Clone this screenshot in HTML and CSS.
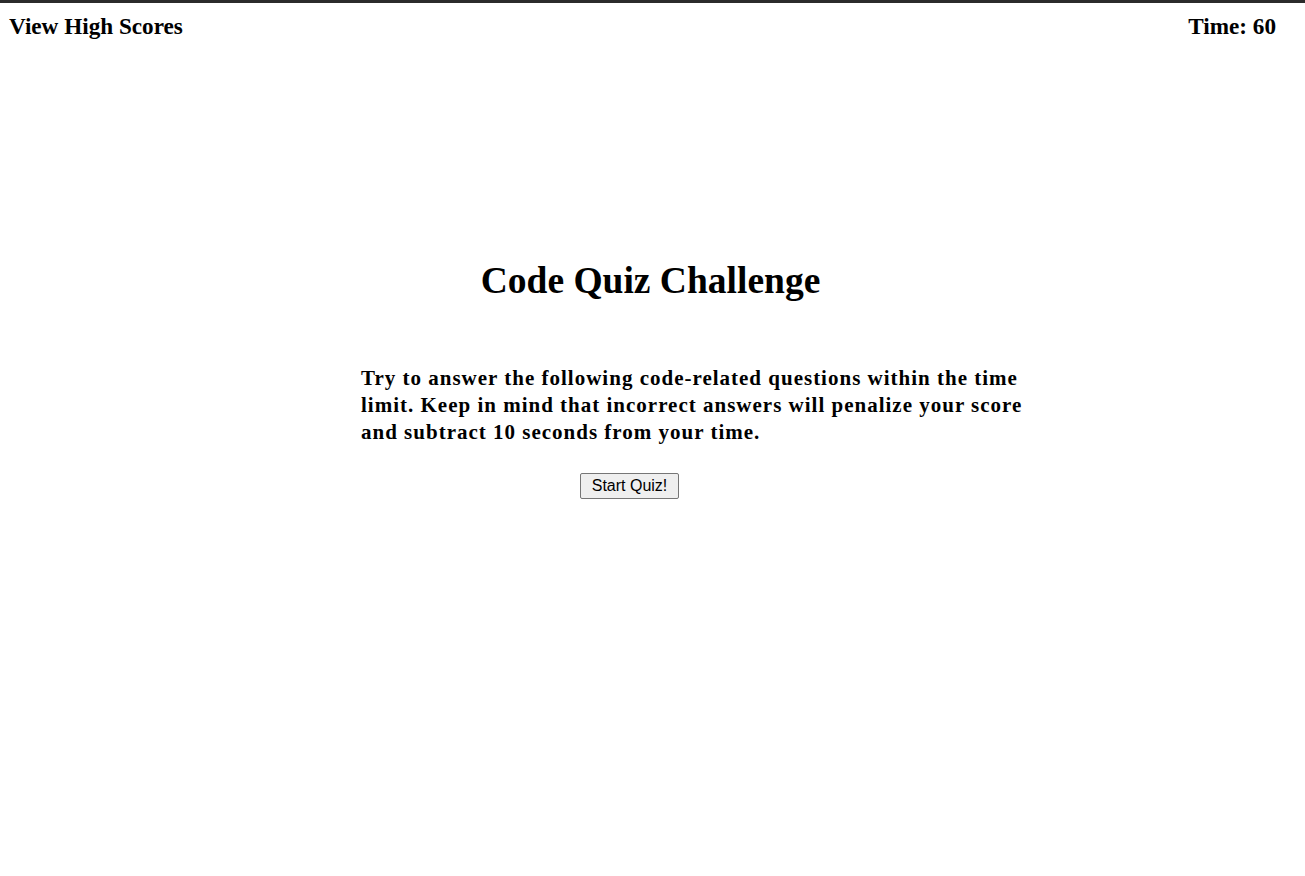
FILE: index.html
```html
<!DOCTYPE html>
<html>
<head>
<meta charset="utf-8">
<title>Code Quiz</title>
<link rel="stylesheet" href="styles.css">
</head>
<body>
<header class="topbar">
  <a class="scores-link">View High Scores</a>
  <span class="timer">Time: 60</span>
</header>
<main class="intro">
  <h1 class="title">Code Quiz Challenge</h1>
  <p class="lead">Try to answer the following code-related questions within the time limit. Keep in mind that incorrect answers will penalize your score and subtract 10 seconds from your time.</p>
  <div class="actions"><button class="start-btn">Start Quiz!</button></div>
</main>
</body>
</html>
```
FILE: styles.css
```css
html, body { margin: 0; padding: 0; }
body {
  font-family: "Liberation Serif", "Times New Roman", serif;
  color: #000;
  background: #fff;
  border-top: 3px solid #2b2b2b;
}
.topbar {
  display: flex;
  justify-content: space-between;
  padding: 11px 29px 0 9px;
  font-weight: bold;
  font-size: 23.2px;
  line-height: 24px;
}
.intro {
  display: flex;
  flex-direction: column;
}
.title {
  align-self: center;
  font-size: 37.5px;
  font-weight: bold;
  margin: 221px 0 0 -4px;
  line-height: 43px;
}
.lead {
  width: 690px;
  margin: 63px 0 0 361px;
  font-size: 21px;
  font-weight: bold;
  line-height: 27px;
  letter-spacing: 1px;
}
.actions {
  margin-top: 27px;
  padding-left: 580px;
}
.start-btn {
  font-family: "Liberation Sans", Arial, sans-serif;
  font-size: 16px;
  padding: 1px 6px;
  height: 26px;
  width: 99px;
  background: #efefef;
  border: 1px solid #767676;
  border-radius: 2px;
  color: #000;
}
```
